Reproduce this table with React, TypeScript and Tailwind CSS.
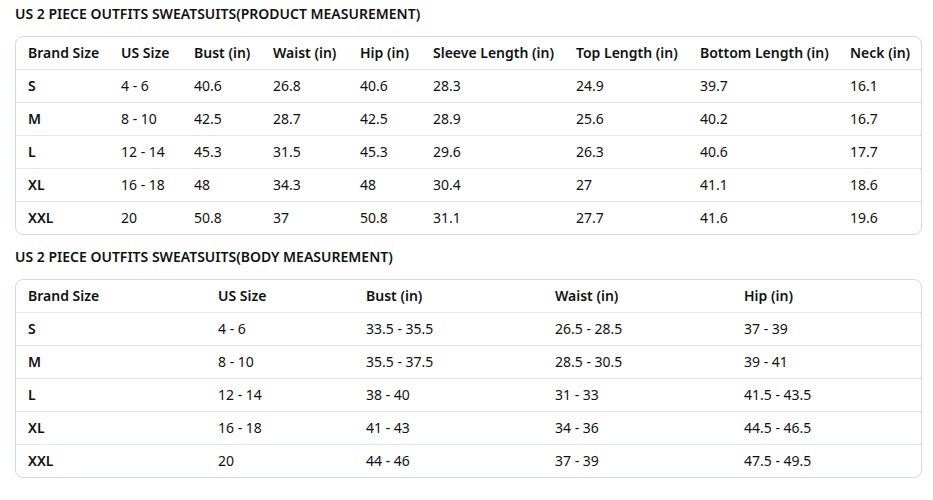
const productCols = [
  { label: "Brand Size", w: "w-[93px]" },
  { label: "US Size", w: "w-[73px]" },
  { label: "Bust (in)", w: "w-[79px]" },
  { label: "Waist (in)", w: "w-[87px]" },
  { label: "Hip (in)", w: "w-[73px]" },
  { label: "Sleeve Length (in)", w: "w-[143px]" },
  { label: "Top Length (in)", w: "w-[124px]" },
  { label: "Bottom Length (in)", w: "w-[150px]" },
  { label: "Neck (in)", w: "" },
];

const productRows = [
  ["S", "4 - 6", "40.6", "26.8", "40.6", "28.3", "24.9", "39.7", "16.1"],
  ["M", "8 - 10", "42.5", "28.7", "42.5", "28.9", "25.6", "40.2", "16.7"],
  ["L", "12 - 14", "45.3", "31.5", "45.3", "29.6", "26.3", "40.6", "17.7"],
  ["XL", "16 - 18", "48", "34.3", "48", "30.4", "27", "41.1", "18.6"],
  ["XXL", "20", "50.8", "37", "50.8", "31.1", "27.7", "41.6", "19.6"],
];

const bodyCols = [
  { label: "Brand Size", w: "w-[190px]" },
  { label: "US Size", w: "w-[148px]" },
  { label: "Bust (in)", w: "w-[189px]" },
  { label: "Waist (in)", w: "w-[189px]" },
  { label: "Hip (in)", w: "" },
];

const bodyRows = [
  ["S", "4 - 6", "33.5 - 35.5", "26.5 - 28.5", "37 - 39"],
  ["M", "8 - 10", "35.5 - 37.5", "28.5 - 30.5", "39 - 41"],
  ["L", "12 - 14", "38 - 40", "31 - 33", "41.5 - 43.5"],
  ["XL", "16 - 18", "41 - 43", "34 - 36", "44.5 - 46.5"],
  ["XXL", "20", "44 - 46", "37 - 39", "47.5 - 49.5"],
];

type Col = { label: string; w: string };

const SizeTable = ({ cols, rows }: { cols: Col[]; rows: string[][] }) => (
  <div className="border border-[#d5d9d9] rounded-lg overflow-hidden">
    <table className="w-full table-fixed border-collapse text-[14px] text-[#0f1111]">
      <thead>
        <tr className="h-[32px]">
          {cols.map((c) => (
            <th key={c.label} className={`${c.w} text-left font-semibold pl-[12px] pr-1 whitespace-nowrap`}>
              {c.label}
            </th>
          ))}
        </tr>
      </thead>
      <tbody>
        {rows.map((r) => (
          <tr key={r[0]} className="h-[33px] border-t border-[#e3e6e6]">
            {r.map((v, i) => (
              <td key={i} className={`pl-[12px] pr-1 whitespace-nowrap ${i === 0 ? "font-semibold" : ""}`}>
                {v}
              </td>
            ))}
          </tr>
        ))}
      </tbody>
    </table>
  </div>
);

export default function App() {
  return (
    <div className="w-[933px] h-[500px] bg-white px-[15px] pt-[4px] font-['Noto_Sans',sans-serif] text-[#0f1111]">
      <h2 className="text-[14px] font-semibold leading-[20px] mb-[12px]">
        US 2 PIECE OUTFITS SWEATSUITS(PRODUCT MEASUREMENT)
      </h2>
      <div className="w-[907px]">
        <SizeTable cols={productCols} rows={productRows} />
      </div>
      <h2 className="text-[14px] font-semibold leading-[20px] mt-[12px] mb-[12px]">
        US 2 PIECE OUTFITS SWEATSUITS(BODY MEASUREMENT)
      </h2>
      <div className="w-[907px]">
        <SizeTable cols={bodyCols} rows={bodyRows} />
      </div>
    </div>
  );
}
